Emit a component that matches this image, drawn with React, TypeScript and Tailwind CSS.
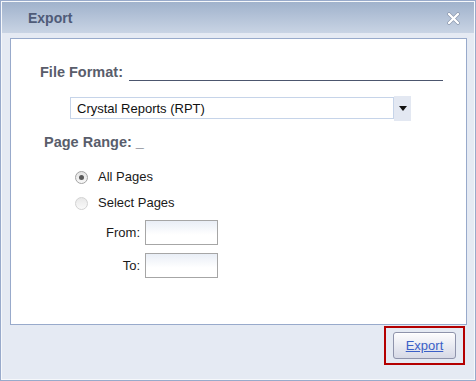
import React, { useState } from 'react';

function Radio({ checked }: { checked: boolean }) {
  return (
    <span
      className={
        'flex h-[13px] w-[13px] items-center justify-center rounded-full border ' +
        (checked
          ? 'border-[#a4a4a4] bg-gradient-to-b from-[#e4e4e4] to-[#f8f8f8]'
          : 'border-[#d2d2d2] bg-gradient-to-b from-[#e8e8e8] to-[#fafafa]')
      }
    >
      {checked && <span className="h-[5px] w-[5px] rounded-full bg-[#5a5a5a]" />}
    </span>
  );
}

export default function App() {
  const [range, setRange] = useState<'all' | 'select'>('all');

  return (
    <div
      className="h-[381px] w-[476px] border border-[#98aacb] bg-[#e5eaf3]"
      style={{ fontFamily: '"Liberation Sans", Arial, sans-serif' }}
    >
      <div className="flex h-full flex-col border border-[#f6f8fb]">
        {/* title bar */}
        <div className="flex h-[31px] items-center justify-between bg-gradient-to-b from-[#a0b2cc] to-[#c9d4e4] pl-[26px] pr-[14px] pt-px">
          <span className="text-[14px] font-bold text-[#4f5b78]">Export</span>
          <svg width="13" height="13" viewBox="0 0 13 13">
            <path d="M2 2 L11 11 M11 2 L2 11" stroke="#8a96ac" strokeWidth="3.6" strokeLinecap="round" />
            <path d="M2 2 L11 11 M11 2 L2 11" stroke="#ffffff" strokeWidth="2.4" strokeLinecap="round" />
          </svg>
        </div>

        {/* content panel */}
        <div className="ml-[8px] mt-[5px] h-[287px] w-[457px] border border-[#98aacb] bg-white">
          <div className="ml-[29px] mt-[23px] flex items-start">
            <span className="text-[14.5px] font-bold leading-[20px] text-[#595d6b]">File Format:</span>
            <div className="ml-[6px] mt-[18px] h-px w-[314px] bg-[#4c566e]" />
          </div>

          <div className="ml-[59px] mt-[14px] flex items-start">
            <div className="mt-px flex h-[22px] w-[324px] items-center border border-[#c6d4e9] pl-[6px] pt-px text-[13px] text-[#111]">
              Crystal Reports (RPT)
            </div>
            <div className="flex h-[25px] w-[17px] items-center justify-center bg-[#e3e8f2]">
              <svg width="8" height="5" viewBox="0 0 8 5">
                <path d="M0 0 H8 L4 5 Z" fill="#111" />
              </svg>
            </div>
          </div>

          <div className="ml-[33px] mt-[11px] text-[14.5px] font-bold leading-[20px] text-[#595d6b]">
            Page Range: _
          </div>

          <div className="ml-[64px] mt-[15px] flex flex-col gap-[6px] text-[13px] text-[#1a1a1a]">
            <label className="flex h-[20px] items-center gap-[10px]" onClick={() => setRange('all')}>
              <Radio checked={range === 'all'} />
              <span>All Pages</span>
            </label>
            <label className="flex h-[20px] items-center gap-[10px]" onClick={() => setRange('select')}>
              <Radio checked={range === 'select'} />
              <span>Select Pages</span>
            </label>
          </div>

          <div className="ml-[79px] mt-[7px] grid grid-cols-[50px_73px] items-center gap-x-[5px] gap-y-[8px] text-[13px] text-[#1a1a1a]">
            <span className="text-right">From:</span>
            <div className="h-[25px] border border-[#a6a6a6] bg-gradient-to-b from-[#e9eef6] to-white to-60%" />
            <span className="text-right">To:</span>
            <div className="h-[25px] border border-[#a6a6a6] bg-gradient-to-b from-[#e9eef6] to-white to-60%" />
          </div>
        </div>

        {/* footer */}
        <div className="ml-[8px] mt-px flex w-[457px] justify-end pr-[2px]">
          <div className="flex h-[39px] w-[81px] items-center justify-center border-2 border-[#b40000]">
            <button className="flex h-[27px] w-[63px] items-center justify-center rounded-[3px] border border-[#8e93ab] bg-gradient-to-b from-[#fdfdfe] to-[#d6d9e6] text-[13px] text-[#3a5fc7] underline shadow-[inset_0_1px_0_#ffffff]">
              Export
            </button>
          </div>
        </div>
      </div>
    </div>
  );
}
